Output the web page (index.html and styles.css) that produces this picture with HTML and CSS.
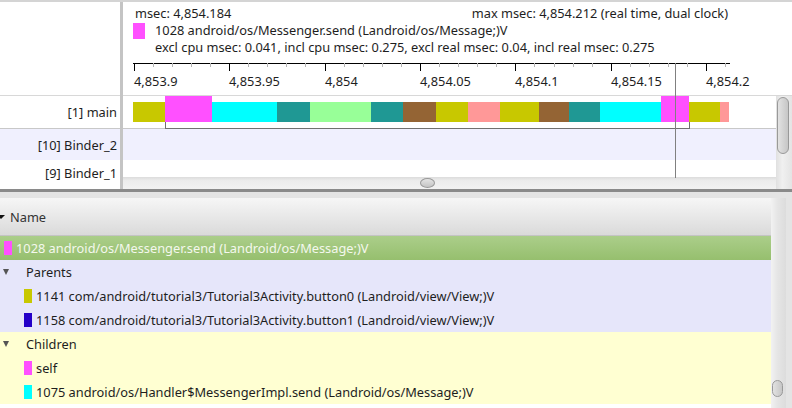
FILE: index.html
```html
<!DOCTYPE html>
<html>
<head>
<meta charset="utf-8">
<link rel="stylesheet" href="styles.css">
</head>
<body>
<div class="timeline">
  <div class="labels">
    <div class="labels-head"></div>
    <div class="label-row row-main">[1] main</div>
    <div class="label-row row-alt">[10] Binder_2</div>
    <div class="label-row row-last">[9] Binder_1</div>
  </div>
  <div class="divider"></div>
  <div class="plot">
    <div class="info">
      <div class="line line-top"><span>msec: 4,854.184</span><span>max msec: 4,854.212 (real time, dual clock)</span></div>
      <div class="line line-method"><span class="swatch-lg c-mag"></span><span>1028 android/os/Messenger.send (Landroid/os/Message;)V</span></div>
      <div class="line line-excl">excl cpu msec: 0.041, incl cpu msec: 0.275, excl real msec: 0.04, incl real msec: 0.275</div>
      <svg class="ruler" width="650" height="37" viewBox="0 0 650 37">
        <line class="axis" x1="0" y1="7.5" x2="597" y2="7.5"/>
        <g class="minor">
          <line x1="20.5" y1="7" x2="20.5" y2="11"/><line x1="39.5" y1="7" x2="39.5" y2="11"/><line x1="58.5" y1="7" x2="58.5" y2="11"/><line x1="77.5" y1="7" x2="77.5" y2="11"/>
          <line x1="115.5" y1="7" x2="115.5" y2="11"/><line x1="134.5" y1="7" x2="134.5" y2="11"/><line x1="153.5" y1="7" x2="153.5" y2="11"/><line x1="172.5" y1="7" x2="172.5" y2="11"/>
          <line x1="211.5" y1="7" x2="211.5" y2="11"/><line x1="230.5" y1="7" x2="230.5" y2="11"/><line x1="249.5" y1="7" x2="249.5" y2="11"/><line x1="268.5" y1="7" x2="268.5" y2="11"/>
          <line x1="306.5" y1="7" x2="306.5" y2="11"/><line x1="325.5" y1="7" x2="325.5" y2="11"/><line x1="344.5" y1="7" x2="344.5" y2="11"/><line x1="363.5" y1="7" x2="363.5" y2="11"/>
          <line x1="401.5" y1="7" x2="401.5" y2="11"/><line x1="421.5" y1="7" x2="421.5" y2="11"/><line x1="440.5" y1="7" x2="440.5" y2="11"/><line x1="459.5" y1="7" x2="459.5" y2="11"/>
          <line x1="497.5" y1="7" x2="497.5" y2="11"/><line x1="516.5" y1="7" x2="516.5" y2="11"/><line x1="535.5" y1="7" x2="535.5" y2="11"/><line x1="554.5" y1="7" x2="554.5" y2="11"/>
          <line x1="592.5" y1="7" x2="592.5" y2="11"/>
        </g>
        <g class="major">
          <line x1="1.5" y1="7" x2="1.5" y2="15"/><line x1="96.5" y1="7" x2="96.5" y2="15"/><line x1="192.5" y1="7" x2="192.5" y2="15"/><line x1="287.5" y1="7" x2="287.5" y2="15"/><line x1="382.5" y1="7" x2="382.5" y2="15"/><line x1="478.5" y1="7" x2="478.5" y2="15"/><line x1="573.5" y1="7" x2="573.5" y2="15"/>
        </g>
        <g class="tick-labels">
          <text x="1" y="30">4,853.9</text>
          <text x="96" y="30">4,853.95</text>
          <text x="192" y="30">4,854</text>
          <text x="287" y="30">4,854.05</text>
          <text x="382" y="30">4,854.1</text>
          <text x="478" y="30">4,854.15</text>
          <text x="573" y="30">4,854.2</text>
        </g>
      </svg>
    </div>
    <div class="tracks">
      <div class="track-area">
        <div class="track track-main">
          <div class="blk c-olive" style="left:10px;width:32px"></div>
          <div class="blk tall c-mag" style="left:42px;width:47px"></div>
          <div class="blk c-cyan" style="left:89px;width:65px"></div>
          <div class="blk c-teal" style="left:154px;width:33px"></div>
          <div class="blk c-green" style="left:187px;width:61px"></div>
          <div class="blk c-teal" style="left:248px;width:32px"></div>
          <div class="blk c-brown" style="left:280px;width:33px"></div>
          <div class="blk c-olive" style="left:313px;width:32px"></div>
          <div class="blk c-pink" style="left:345px;width:32px"></div>
          <div class="blk c-olive" style="left:377px;width:39px"></div>
          <div class="blk c-brown" style="left:416px;width:30px"></div>
          <div class="blk c-teal" style="left:446px;width:31px"></div>
          <div class="blk c-cyan" style="left:477px;width:61px"></div>
          <div class="blk tall c-mag" style="left:538px;width:28px"></div>
          <div class="blk c-olive" style="left:566px;width:31px"></div>
          <div class="blk c-pink" style="left:597px;width:9px"></div>
          <div class="bracket" style="left:42px;width:525px"></div>
        </div>
        <div class="track track-alt"></div>
        <div class="track track-last"></div>
        <div class="hscroll"><div class="hthumb"></div></div>
      </div>
      <div class="vscroll"><div class="vthumb"></div></div>
    </div>
    <div class="cursor"></div>
  </div>
</div>
<div class="sash"></div>
<div class="tree">
  <div class="tree-main">
    <div class="tree-head"><span class="head-arrow"></span><span>Name</span></div>
    <div class="trow sel"><span class="sw c-mag"></span><span>1028 android/os/Messenger.send (Landroid/os/Message;)V</span></div>
    <div class="trow grp parents"><span class="twisty"></span><span>Parents</span></div>
    <div class="trow leaf parents"><span class="sw c-olive"></span><span>1141 com/android/tutorial3/Tutorial3Activity.button0 (Landroid/view/View;)V</span></div>
    <div class="trow leaf parents"><span class="sw c-blue"></span><span>1158 com/android/tutorial3/Tutorial3Activity.button1 (Landroid/view/View;)V</span></div>
    <div class="trow grp children"><span class="twisty"></span><span>Children</span></div>
    <div class="trow leaf children"><span class="sw c-mag"></span><span>self</span></div>
    <div class="trow leaf children"><span class="sw c-cyan"></span><span>1075 android/os/Handler$MessengerImpl.send (Landroid/os/Message;)V</span></div>
  </div>
  <div class="tree-scroll"><div class="tree-thumb"></div></div>
  <div class="tree-edge"></div>
</div>
</body>
</html>
```
FILE: styles.css
```css
* { box-sizing: border-box; }
html, body { margin: 0; padding: 0; }
body {
  width: 792px;
  height: 408px;
  overflow: hidden;
  background: #fff;
  font-family: "Noto Sans", "Open Sans", "DejaVu Sans", sans-serif;
  font-size: 12.8px;
  color: #1e1e1e;
}

/* colours */
.c-olive { background: #c8c800; }
.c-mag { background: #ff50ff; }
.c-cyan { background: #00ffff; }
.c-teal { background: #1f9894; }
.c-green { background: #98ff98; }
.c-brown { background: #946434; }
.c-pink { background: #ff9898; }
.c-blue { background: #2400c8; }

/* timeline */
.timeline {
  display: flex;
  height: 189px;
  border-top: 2px solid #d4d4d4;
}
.labels {
  width: 120px;
  display: flex;
  flex-direction: column;
  background: #fff;
}
.labels-head {
  height: 94px;
  border-bottom: 1px solid #d8d8d8;
}
.label-row {
  display: flex;
  align-items: center;
  justify-content: flex-end;
  padding-right: 3px;
  white-space: nowrap;
}
.row-main { height: 33px; border-bottom: 1px solid #c8c8c8; }
.row-alt { height: 31px; background: #f0f0fe; }
.row-last { flex: 1; padding-bottom: 3px; }
.divider { width: 3px; background: #c4c4c4; }

.plot {
  flex: 1;
  position: relative;
  display: flex;
  flex-direction: column;
}
.info {
  height: 93px;
  padding: 3px 0 0 10px;
}
.line {
  height: 17px;
  line-height: 17px;
  white-space: nowrap;
}
.line-top {
  display: flex;
  justify-content: space-between;
  width: 595px;
  padding-left: 2px;
}
.line-method { display: flex; align-items: center; }
.line-excl { padding-left: 22px; }
.swatch-lg {
  width: 12px;
  height: 16px;
  margin-right: 10px;
  flex: none;
}
.ruler { display: block; overflow: visible; }
.ruler .axis { stroke: #000; stroke-width: 1; }
.ruler .major line { stroke: #000; stroke-width: 1; }
.ruler .minor line { stroke: #b4b4b4; stroke-width: 1; }
.ruler text {
  font-family: "Noto Sans", "Open Sans", "DejaVu Sans", sans-serif;
  font-size: 12.8px;
  fill: #1e1e1e;
}

.tracks {
  flex: 1;
  display: flex;
  border-top: 1px solid #d8d8d8;
}
.track-area {
  flex: 1;
  display: flex;
  flex-direction: column;
}
.track { position: relative; }
.track-main { height: 33px; border-bottom: 1px solid #c8c8c8; }
.track-alt { height: 31px; background: #f0f0fe; }
.track-last { flex: 1; }
.blk {
  position: absolute;
  top: 6px;
  height: 20px;
}
.blk.tall { top: 0; height: 26px; }
.bracket {
  position: absolute;
  top: 26px;
  height: 7px;
  border: 1px solid #707070;
  border-top: none;
}
.hscroll {
  height: 12px;
  position: relative;
  background: linear-gradient(#dcdcdc, #ececec 30%, #f2f2f2);
}
.hthumb {
  position: absolute;
  left: 297px;
  top: 1px;
  width: 15px;
  height: 10px;
  border-radius: 50%;
  border: 1px solid #999;
  background: linear-gradient(#e4e4e4, #c4c4c4);
}
.vscroll {
  width: 16px;
  position: relative;
  background: linear-gradient(90deg, #e0e0e0, #f0f0f0 40%, #e4e4e4);
}
.vthumb {
  position: absolute;
  left: 1px;
  top: 1px;
  width: 12px;
  height: 57px;
  border-radius: 6px;
  border: 1px solid #999;
  background: linear-gradient(90deg, #e2e2e2, #c6c6c6);
}
.cursor {
  position: absolute;
  left: 552px;
  top: 61px;
  width: 1px;
  height: 115px;
  background: #808080;
}

/* splitter */
.sash {
  height: 9px;
  border-top: 3px solid #8a8a8a;
  background: #e4e4e4;
}

/* tree */
.tree {
  display: flex;
  height: 210px;
}
.tree-main {
  width: 771px;
  display: flex;
  flex-direction: column;
  background: #fff;
}
.tree-head {
  height: 38px;
  display: flex;
  align-items: center;
  border-bottom: 1px solid #c4c4c4;
  background: linear-gradient(#f6f6f6, #dadada);
  color: #333;
  padding-left: 0;
}
.head-arrow {
  width: 0;
  height: 0;
  margin-left: -3px;
  margin-right: 5px;
  border-left: 4px solid transparent;
  border-right: 4px solid transparent;
  border-top: 4px solid #111;
}
.trow {
  height: 24px;
  display: flex;
  align-items: center;
  white-space: nowrap;
}
.sw {
  width: 8px;
  height: 14px;
  margin-right: 4px;
  flex: none;
}
.sel {
  padding-left: 4px;
  background: linear-gradient(#abce8a, #96bf6e);
  color: #f4f8ee;
}
.parents { background: #e6e6fa; }
.children { background: #ffffd2; }
.grp { padding-left: 3px; }
.leaf { padding-left: 24px; }
.twisty {
  width: 0;
  height: 0;
  margin-right: 17px;
  border-left: 3px solid transparent;
  border-right: 3px solid transparent;
  border-top: 6px solid #555;
}
.tree-scroll {
  width: 15px;
  position: relative;
  background: linear-gradient(90deg, #f2f2f2, #e6e6e6 40%, #dcdcdc);
}
.tree-thumb {
  position: absolute;
  left: 1px;
  top: 182px;
  width: 11px;
  height: 17px;
  border-radius: 6px;
  border: 1px solid #999;
  background: linear-gradient(90deg, #e2e2e2, #c6c6c6);
}
.tree-edge {
  flex: 1;
  background: #e4e4e4;
}
```
